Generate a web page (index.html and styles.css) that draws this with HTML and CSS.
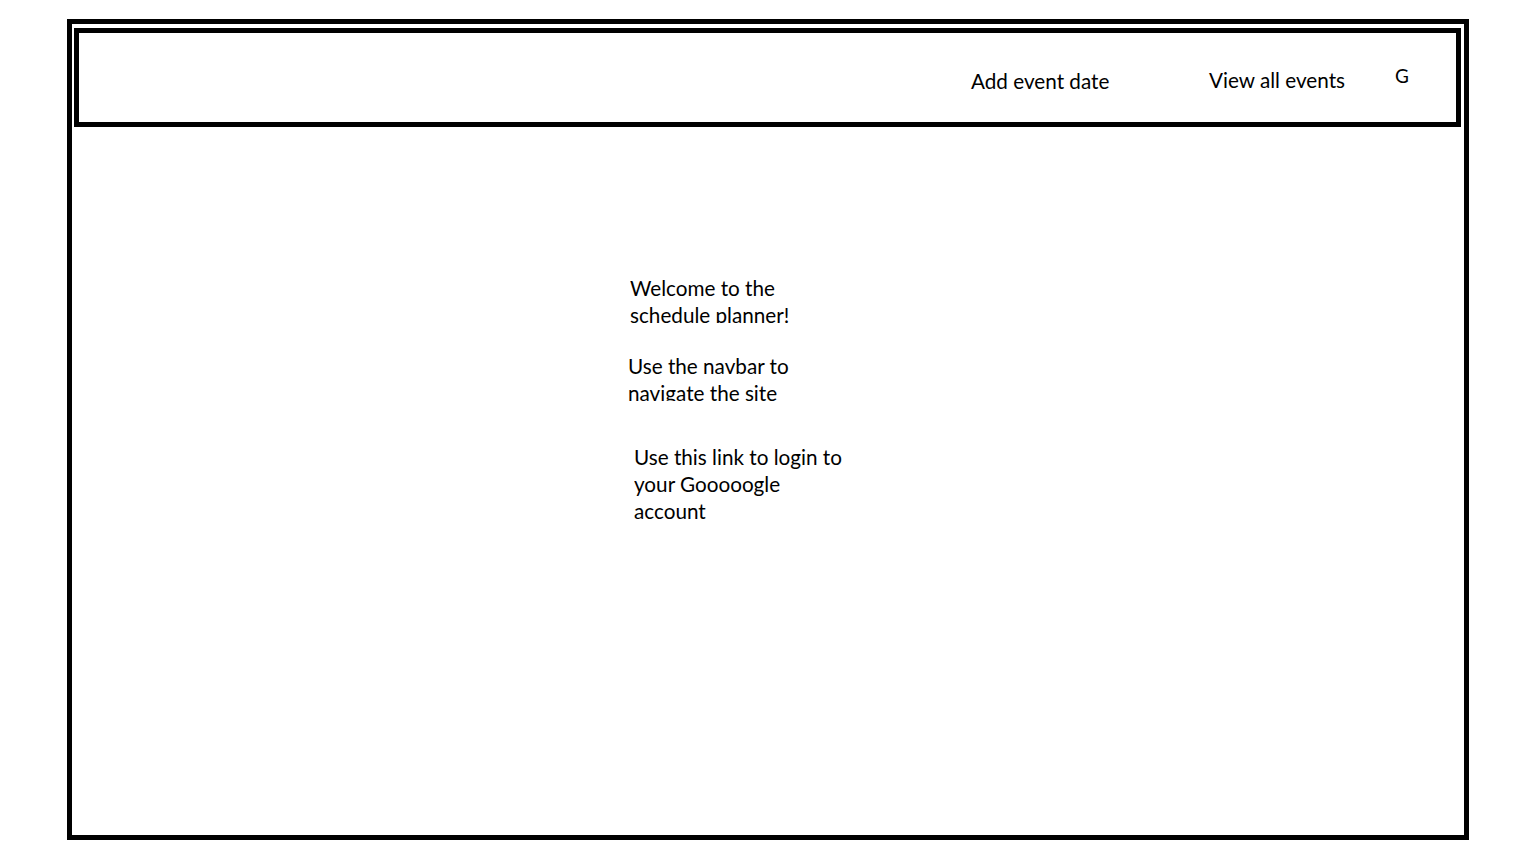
FILE: index.html
```html
<!DOCTYPE html>
<html lang="en">
<head>
<meta charset="utf-8">
<title>Schedule planner</title>
<link rel="stylesheet" href="styles.css">
</head>
<body>
<div class="frame">
  <header class="navbar">
    <nav class="nav">
      <a class="nav-link nav-add" href="#">Add event date</a>
      <a class="nav-link nav-view" href="#">View all events</a>
      <a class="nav-link nav-g" href="#">G</a>
    </nav>
  </header>
  <main class="content">
    <p class="block block-welcome">Welcome to the<br>schedule planner!</p>
    <p class="block block-navbar">Use the navbar to<br>navigate the site</p>
    <p class="block block-link">Use this link to login to<br>your Gooooogle<br>account</p>
  </main>
</div>
</body>
</html>
```
FILE: styles.css
```css
* { box-sizing: border-box; }
html, body { margin: 0; padding: 0; background: #fff; }
body {
  font-family: Lato, "Liberation Sans", sans-serif;
  font-size: 20.7px;
  line-height: 27px;
  color: #000;
}
.frame {
  margin: 19px 0 0 67px;
  width: 1402px;
  height: 821px;
  border: 5px solid #000;
  padding: 4px 3px 0 2px;
}
.navbar {
  height: 99px;
  border: 5px solid #000;
  padding: 28px 0 0 892px;
}
.nav { display: flex; align-items: flex-start; }
.nav-link { color: #000; text-decoration: none; display: block; }
.nav-add { width: 238px; margin-top: 7px; }
.nav-view { width: 186px; margin-top: 6px; }
.nav-g { font-size: 19px; margin-top: 1px; }
.content {
  display: flex;
  flex-direction: column;
  align-items: flex-start;
  padding-top: 148px;
}
.block { margin: 0; overflow: hidden; }
.block-welcome { margin-left: 556px; height: 48px; }
.block-navbar { margin-left: 554px; margin-top: 30px; height: 48px; }
.block-link { margin-left: 560px; margin-top: 43px; }
```
